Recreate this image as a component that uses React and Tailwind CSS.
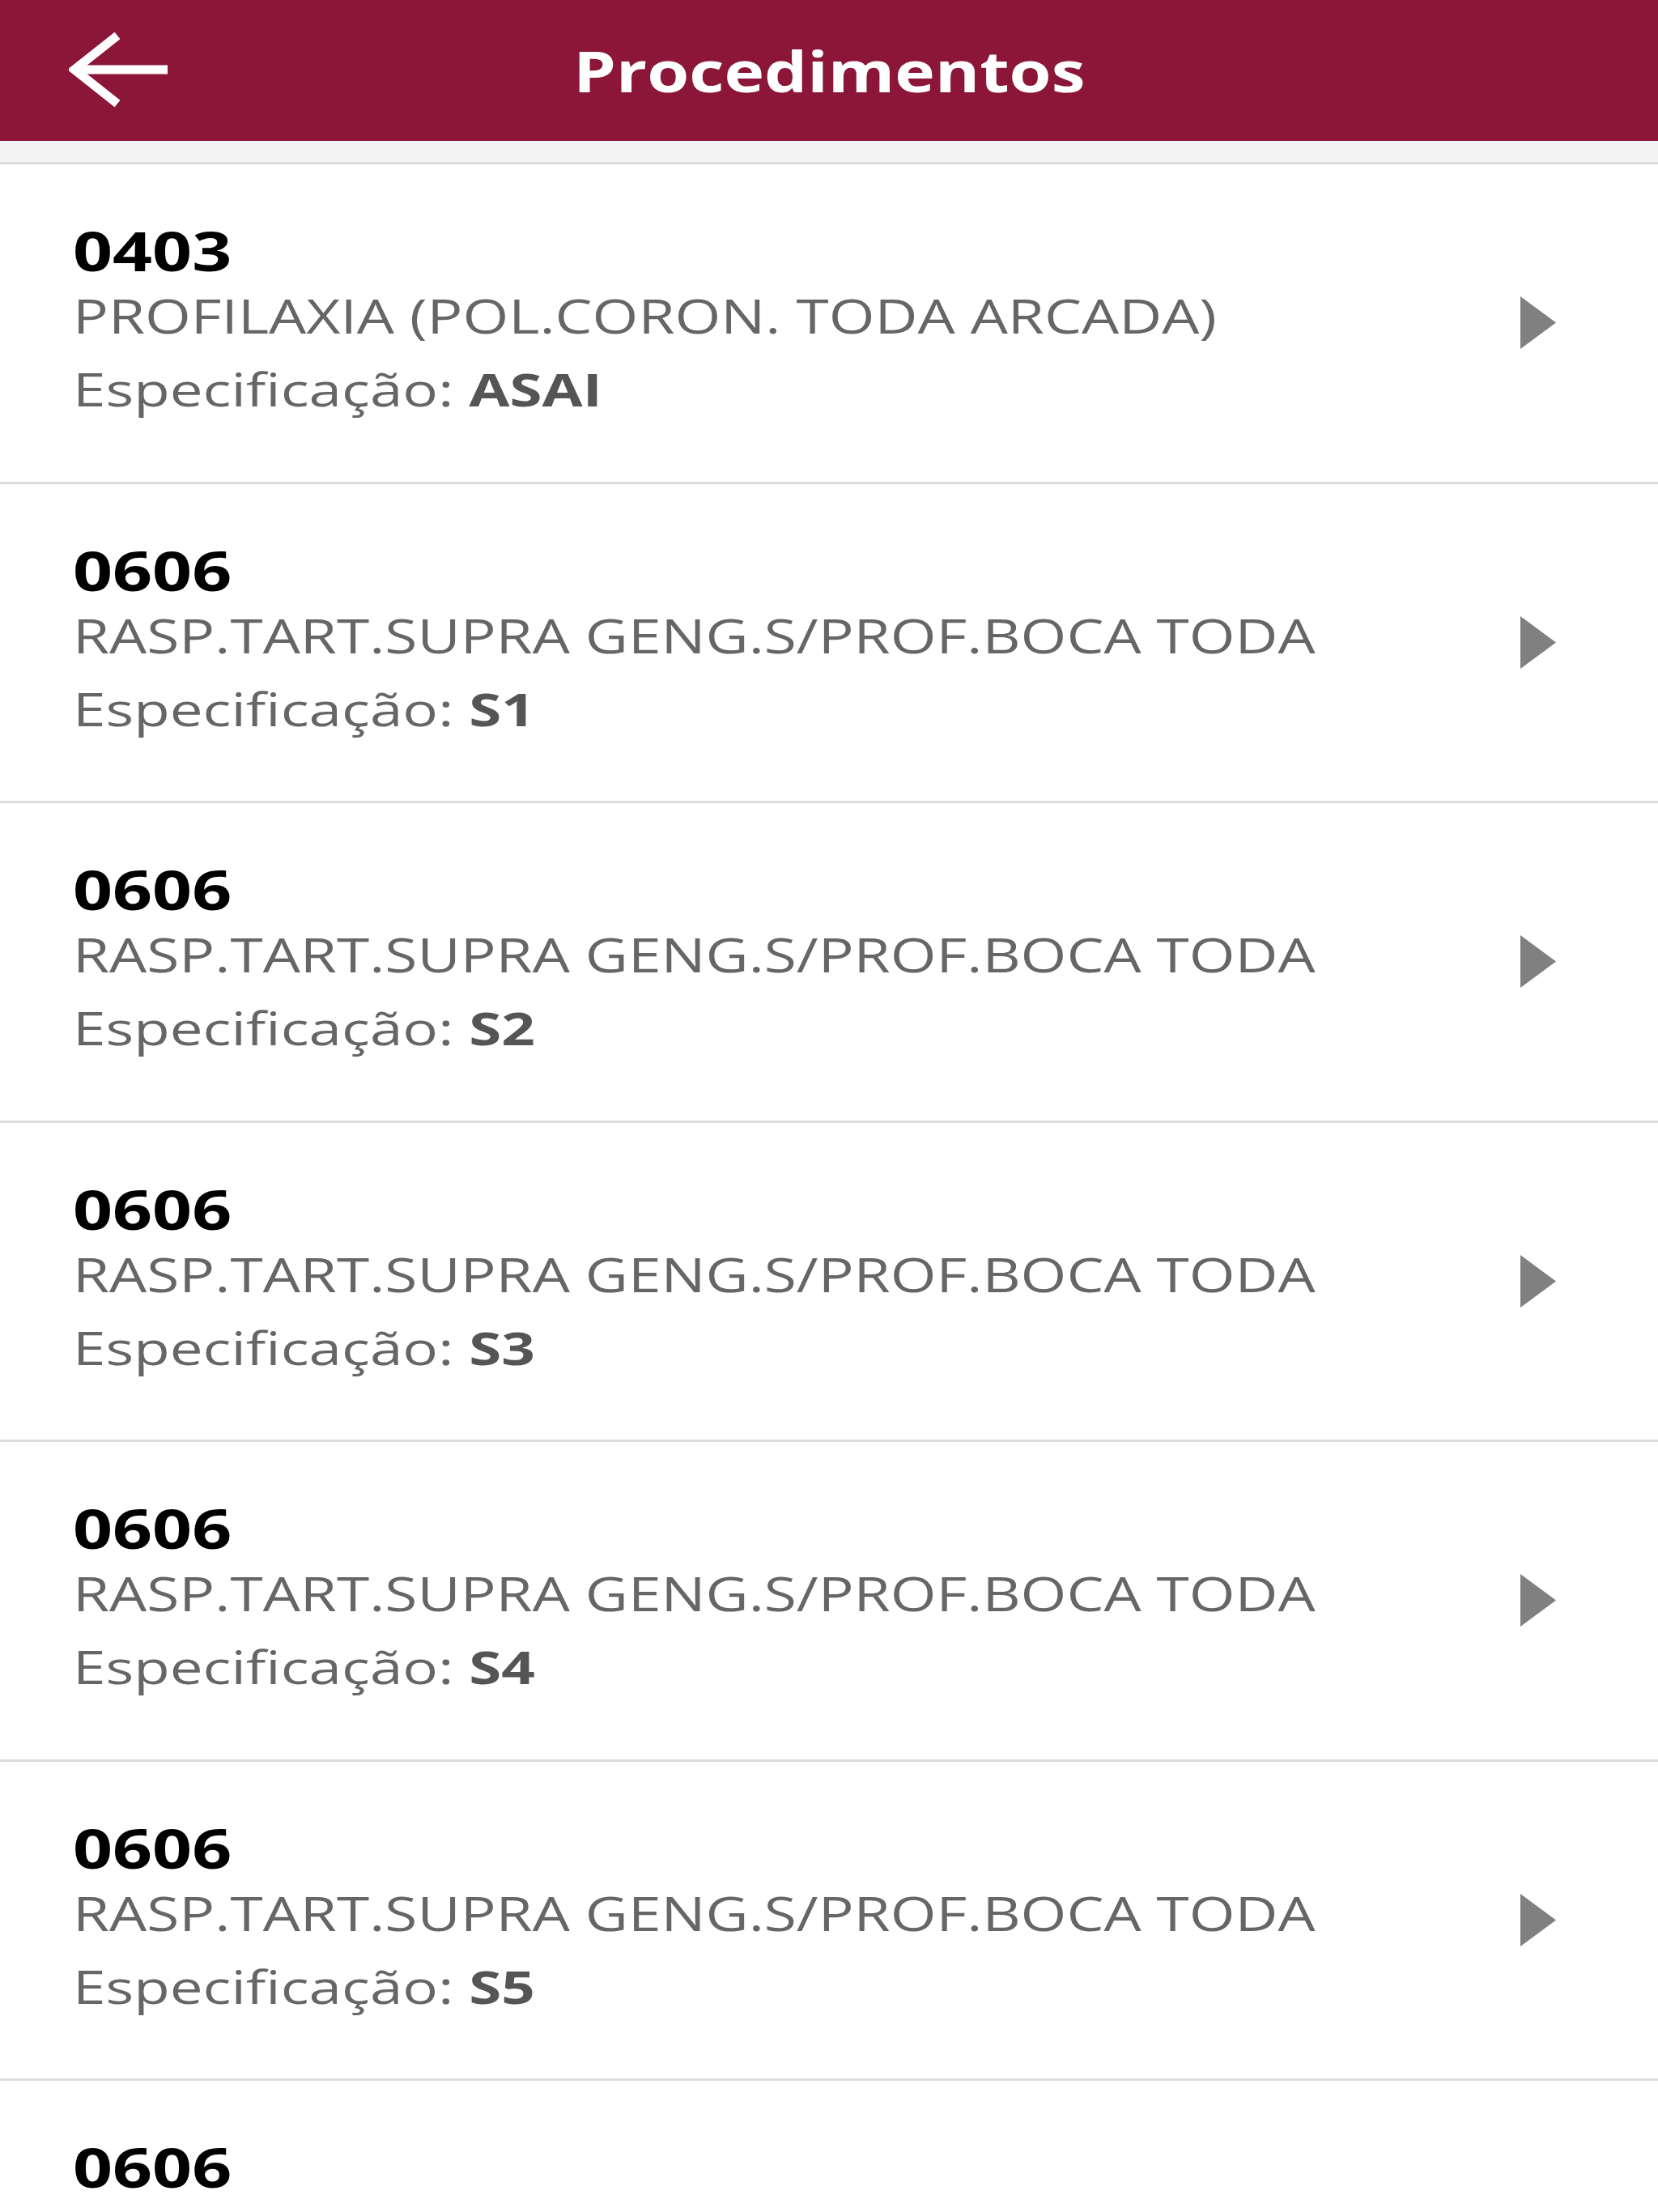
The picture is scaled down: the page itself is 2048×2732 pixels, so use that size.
import React from "react";

const rows = [
  { code: "0403", desc: "PROFILAXIA (POL.CORON. TODA ARCADA)", spec: "ASAI" },
  { code: "0606", desc: "RASP.TART.SUPRA GENG.S/PROF.BOCA TODA", spec: "S1" },
  { code: "0606", desc: "RASP.TART.SUPRA GENG.S/PROF.BOCA TODA", spec: "S2" },
  { code: "0606", desc: "RASP.TART.SUPRA GENG.S/PROF.BOCA TODA", spec: "S3" },
  { code: "0606", desc: "RASP.TART.SUPRA GENG.S/PROF.BOCA TODA", spec: "S4" },
  { code: "0606", desc: "RASP.TART.SUPRA GENG.S/PROF.BOCA TODA", spec: "S5" },
  { code: "0606", desc: "RASP.TART.SUPRA GENG.S/PROF.BOCA TODA", spec: "S6" },
];

function Row({ code, desc, spec }) {
  return (
    <div className="flex items-center h-[394.5px] border-b-[3px] border-[#dcdcdc] bg-white">
      <div className="self-start pl-[90px] pt-[66px] flex flex-col items-start whitespace-nowrap">
        <div className="text-[66px] leading-[80px] font-bold text-black origin-left scale-x-[1.3]">{code}</div>
        <div className="text-[59px] leading-[81px] text-[#666666] origin-left scale-x-[1.238]">{desc}</div>
        <div className="text-[56px] leading-[101px] text-[#666666] origin-left scale-x-[1.3]">
          Especificação: <span className="font-bold text-[#555555]">{spec}</span>
        </div>
      </div>
      <svg className="ml-auto mr-[126px]" width="44" height="65" viewBox="0 0 44 65">
        <polygon points="0,0 44,32.5 0,65" fill="#808080" />
      </svg>
    </div>
  );
}

export default function App() {
  return (
    <div
      className="w-[2048px] h-[2732px] overflow-hidden bg-white"
      style={{ fontFamily: '"Open Sans", "Noto Sans", sans-serif' }}
    >
      <div className="relative h-[174px] bg-[#8b1637] flex items-center justify-center">
        <svg
          className="absolute left-[85px] top-[40px]"
          width="125"
          height="92"
          viewBox="0 0 125 92"
          fill="none"
          stroke="white"
          strokeWidth="11"
        >
          <path d="M122 46 H8" />
          <path d="M60 4 L7 46 L60 88" strokeLinejoin="miter" />
        </svg>
        <div className="text-[70px] leading-[84px] font-bold text-white scale-x-[1.2]">Procedimentos</div>
      </div>
      <div className="h-[26px] bg-[#f4f4f4] border-b-[3px] border-[#dcdcdc] box-content" />
      {rows.map((r, i) => (
        <Row key={i} {...r} />
      ))}
    </div>
  );
}
